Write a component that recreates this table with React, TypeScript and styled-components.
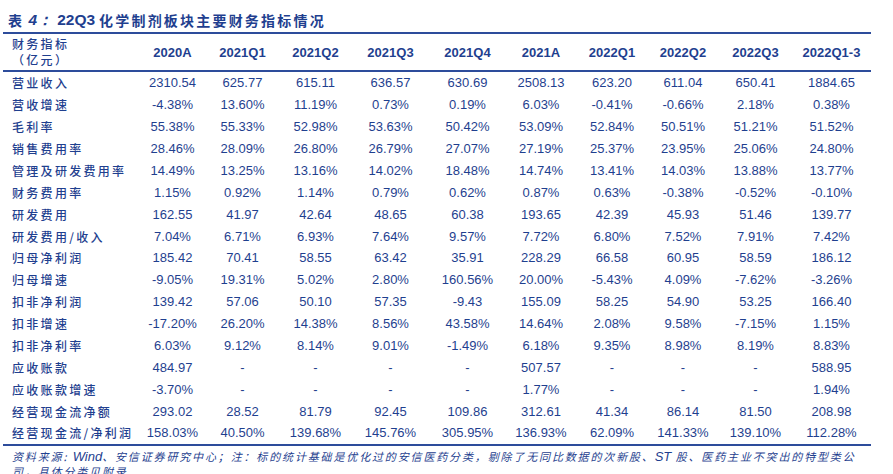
import React from "react";
import styled, { createGlobalStyle } from "styled-components";

const Global = createGlobalStyle`
  html, body { margin: 0; padding: 0; background: #ffffff; }
  body { width: 893px; height: 474px; overflow: hidden; }
`;

const BLUE = "#1f3f8f";
const LINE = "#2d4c9b";
const COLS = "137px 65px 75px 71px 79px 75px 72px 70px 72px 73px 79px";

const Page = styled.div`
  width: 893px;
  height: 474px;
  overflow: hidden;
  color: ${BLUE};
  font-family: "Liberation Sans", Arial, "Noto Sans CJK SC", sans-serif;
`;

const Title = styled.div`
  height: 32px;
  display: flex;
  align-items: flex-end;
  padding: 0 0 2px 8px;
  box-sizing: border-box;
  font-weight: 700;
  font-size: 15px;
  line-height: 20px;
  white-space: nowrap;
`;

const TitleHan = styled.span`
  font-family: "Noto Sans CJK SC", sans-serif;
  font-size: 14px;
  letter-spacing: 2.2px;
`;

const TitleNum = styled.span<{ $italic?: boolean }>`
  font-family: "Liberation Sans", Arial, sans-serif;
  font-size: 15.5px;
  font-style: ${(p) => (p.$italic ? "italic" : "normal")};
  margin-right: 4px;
`;

const Table = styled.div`
  margin-left: 3px;
  width: 868px;
  border-top: 2px solid ${LINE};
  border-bottom: 2px solid ${LINE};
`;

const HeaderRow = styled.div`
  display: grid;
  grid-template-columns: ${COLS};
  height: 36px;
  align-items: center;
  border-bottom: 2px solid ${LINE};
`;

const Row = styled.div`
  display: grid;
  grid-template-columns: ${COLS};
  height: 21.88px;
  align-items: center;
`;

const Label = styled.div`
  padding-left: 9px;
  font-family: "Noto Sans CJK SC", sans-serif;
  font-weight: 500;
  font-size: 12px;
  letter-spacing: 2.3px;
  white-space: nowrap;
  line-height: 17px;
`;

const HeadLabel = styled(Label)`
  display: flex;
  flex-direction: column;
  gap: 0;
  line-height: 16px;
  padding-bottom: 1px;
`;

const HeadCell = styled.div`
  text-align: center;
  font-weight: 700;
  font-size: 13px;
  white-space: nowrap;
`;

const Cell = styled.div`
  text-align: center;
  font-size: 13px;
  white-space: nowrap;
`;

const Footer = styled.div`
  padding: 3px 0 0 12px;
  font-family: "Noto Sans CJK SC", sans-serif;
  font-style: italic;
  font-size: 11px;
  letter-spacing: 1.85px;
  line-height: 15px;
  white-space: nowrap;
`;

const Latin = styled.span`
  font-family: "Liberation Sans", Arial, sans-serif;
  font-size: 13px;
  letter-spacing: 0;
`;

const headers = [
  "2020A",
  "2021Q1",
  "2021Q2",
  "2021Q3",
  "2021Q4",
  "2021A",
  "2022Q1",
  "2022Q2",
  "2022Q3",
  "2022Q1-3",
];

const rows: string[][] = [
  ["营业收入", "2310.54", "625.77", "615.11", "636.57", "630.69", "2508.13", "623.20", "611.04", "650.41", "1884.65"],
  ["营收增速", "-4.38%", "13.60%", "11.19%", "0.73%", "0.19%", "6.03%", "-0.41%", "-0.66%", "2.18%", "0.38%"],
  ["毛利率", "55.38%", "55.33%", "52.98%", "53.63%", "50.42%", "53.09%", "52.84%", "50.51%", "51.21%", "51.52%"],
  ["销售费用率", "28.46%", "28.09%", "26.80%", "26.79%", "27.07%", "27.19%", "25.37%", "23.95%", "25.06%", "24.80%"],
  ["管理及研发费用率", "14.49%", "13.25%", "13.16%", "14.02%", "18.48%", "14.74%", "13.41%", "14.03%", "13.88%", "13.77%"],
  ["财务费用率", "1.15%", "0.92%", "1.14%", "0.79%", "0.62%", "0.87%", "0.63%", "-0.38%", "-0.52%", "-0.10%"],
  ["研发费用", "162.55", "41.97", "42.64", "48.65", "60.38", "193.65", "42.39", "45.93", "51.46", "139.77"],
  ["研发费用/收入", "7.04%", "6.71%", "6.93%", "7.64%", "9.57%", "7.72%", "6.80%", "7.52%", "7.91%", "7.42%"],
  ["归母净利润", "185.42", "70.41", "58.55", "63.42", "35.91", "228.29", "66.58", "60.95", "58.59", "186.12"],
  ["归母增速", "-9.05%", "19.31%", "5.02%", "2.80%", "160.56%", "20.00%", "-5.43%", "4.09%", "-7.62%", "-3.26%"],
  ["扣非净利润", "139.42", "57.06", "50.10", "57.35", "-9.43", "155.09", "58.25", "54.90", "53.25", "166.40"],
  ["扣非增速", "-17.20%", "26.20%", "14.38%", "8.56%", "43.58%", "14.64%", "2.08%", "9.58%", "-7.15%", "1.15%"],
  ["扣非净利率", "6.03%", "9.12%", "8.14%", "9.01%", "-1.49%", "6.18%", "9.35%", "8.98%", "8.19%", "8.83%"],
  ["应收账款", "484.97", "-", "-", "-", "-", "507.57", "-", "-", "-", "588.95"],
  ["应收账款增速", "-3.70%", "-", "-", "-", "-", "1.77%", "-", "-", "-", "1.94%"],
  ["经营现金流净额", "293.02", "28.52", "81.79", "92.45", "109.86", "312.61", "41.34", "86.14", "81.50", "208.98"],
  ["经营现金流/净利润", "158.03%", "40.50%", "139.68%", "145.76%", "305.95%", "136.93%", "62.09%", "141.33%", "139.10%", "112.28%"],
];

export default function App() {
  return (
    <>
      <Global />
      <Page>
        <Title>
          <TitleHan>表</TitleHan>
          <TitleNum $italic>&nbsp;4：</TitleNum>
          <TitleNum>22Q3</TitleNum>
          <TitleHan>化学制剂板块主要财务指标情况</TitleHan>
        </Title>
        <Table>
          <HeaderRow>
            <HeadLabel>
              <span>财务指标</span>
              <span>（亿元）</span>
            </HeadLabel>
            {headers.map((h) => (
              <HeadCell key={h}>{h}</HeadCell>
            ))}
          </HeaderRow>
          {rows.map((r) => (
            <Row key={r[0]}>
              <Label>{r[0]}</Label>
              {r.slice(1).map((v, i) => (
                <Cell key={i}>{v}</Cell>
              ))}
            </Row>
          ))}
        </Table>
        <Footer>
          <div>
            资料来源: <Latin>Wind</Latin>、安信证券研究中心；注：标的统计基础是优化过的安信医药分类，剔除了无同比数据的次新股、<Latin>ST</Latin> 股、医药主业不突出的特型类公
          </div>
          <div>司，具体分类见附录</div>
        </Footer>
      </Page>
    </>
  );
}
